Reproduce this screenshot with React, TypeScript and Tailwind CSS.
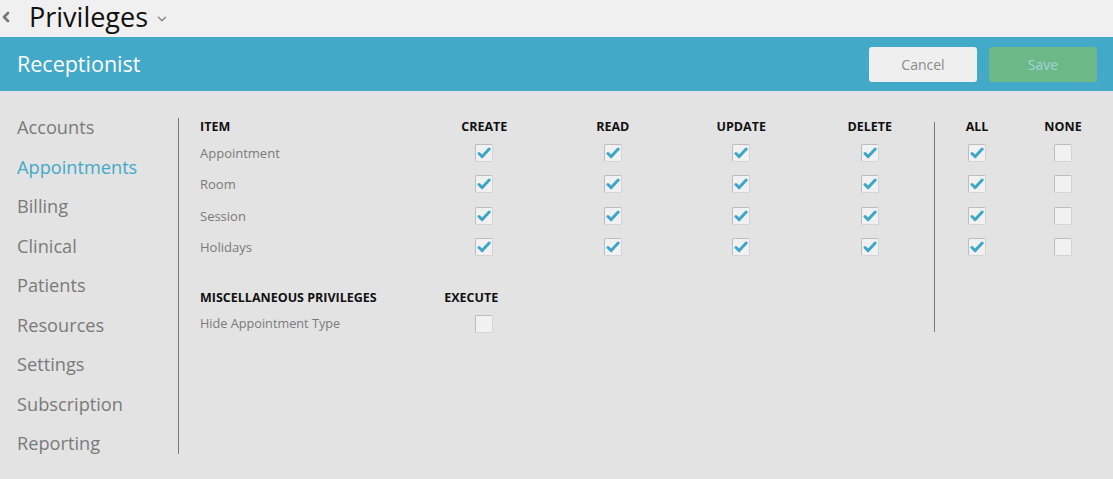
import { ChevronLeft, ChevronDown } from 'lucide-react';

const menu = ['Accounts', 'Appointments', 'Billing', 'Clinical', 'Patients', 'Resources', 'Settings', 'Subscription', 'Reporting'];
const items = ['Appointment', 'Room', 'Session', 'Holidays'];
const cols = ['CREATE', 'READ', 'UPDATE', 'DELETE'];

function Box({ checked }: { checked: boolean }) {
  return (
    <span className="inline-flex h-[18px] w-[18px] items-center justify-center rounded-[2px] border border-[#bdbdbd] border-b-[#d4d4d4] border-r-[#d4d4d4] bg-[#f1f1f1]">
      {checked && (
        <svg width="14" height="12" viewBox="0 0 14 12">
          <path d="M2 6.5 L5.2 9.6 L12.2 2" fill="none" stroke="#3ea7c7" strokeWidth="3" strokeLinecap="round" strokeLinejoin="round" />
        </svg>
      )}
    </span>
  );
}

export default function App() {
  return (
    <div className="h-[479px] w-[1113px] overflow-hidden bg-[#e3e3e3]" style={{ fontFamily: '"Open Sans", "Liberation Sans", sans-serif' }}>
      <div className="flex h-[37px] items-center bg-[#f0f0f0]">
        <ChevronLeft className="ml-[-2px] mt-[-4px] text-[#777]" size={16} strokeWidth={4} />
        <span className="ml-[15px] mt-[-4px] text-[27px] leading-none text-[#111]">Privileges</span>
        <ChevronDown className="ml-[7px] mt-[1px] text-[#888]" size={14} strokeWidth={2.5} />
      </div>

      <div className="flex h-[54px] items-center justify-between bg-[#42a9c8] pl-[17px] pr-[16px]">
        <span className="text-[21.5px] text-white">Receptionist</span>
        <div className="flex gap-[12px]">
          <button className="h-[35px] w-[108px] rounded-[3px] bg-[#efefef] text-[14px] text-[#8a8a8a]">Cancel</button>
          <button className="h-[35px] w-[108px] rounded-[3px] bg-[#6cb987] text-[14px] text-[#a2d3d9]">Save</button>
        </div>
      </div>

      <div className="flex">
        <div className="w-[178px] pl-[17px] pt-[17px]">
          {menu.map((m) => (
            <div key={m} className={`text-[18.2px] leading-[39.5px] ${m === 'Appointments' ? 'text-[#42a9c8]' : 'text-[#7a7a7a]'}`}>
              {m}
            </div>
          ))}
        </div>
        <div className="mt-[27px] h-[336px] w-px bg-[#7a7a7a]" />

        <div className="pl-[21px] pt-[23.5px]">
          <div className="grid w-[734px] grid-cols-[220px_128.5px_128.5px_128.5px_128.5px] items-center">
            <div className="h-[23px] text-[12.5px] font-bold leading-[23px] text-[#111]">ITEM</div>
            {cols.map((c) => (
              <div key={c} className="text-center text-[12.5px] font-bold leading-[23px] text-[#111]">{c}</div>
            ))}
            {items.map((it, i) => (
              <>
                <div key={it} className={`h-[31.3px] text-[13px] text-[#7a7a7a] ${i > 1 ? 'leading-[33px]' : 'leading-[31.3px]'}`}>{it}</div>
                {cols.map((c) => (
                  <div key={it + c} className="flex justify-center"><Box checked /></div>
                ))}
              </>
            ))}
          </div>

          <div className="mt-[23.8px] grid w-[734px] grid-cols-[220px_128.5px] items-center">
            <div className="h-[23px] text-[12.5px] font-bold leading-[23px] text-[#111]">MISCELLANEOUS PRIVILEGES</div>
            <div className="pr-[26px] text-center text-[12.5px] font-bold leading-[23px] text-[#111]">EXECUTE</div>
            <div className="h-[29px] text-[12.7px] leading-[29px] text-[#7a7a7a]">Hide Appointment Type</div>
            <div className="flex justify-center"><Box checked={false} /></div>
          </div>
        </div>

        <div className="mt-[31px] h-[210px] w-px bg-[#7a7a7a]" />

        <div className="pt-[23.5px]">
          <div className="grid grid-cols-[84px_88px] items-center">
            <div className="h-[23px] text-center text-[12.5px] font-bold leading-[23px] text-[#111]">ALL</div>
            <div className="text-center text-[12.5px] font-bold leading-[23px] text-[#111]">NONE</div>
            {items.map((it) => (
              <>
                <div key={it + 'a'} className="flex h-[31.3px] items-center justify-center"><Box checked /></div>
                <div key={it + 'n'} className="flex justify-center"><Box checked={false} /></div>
              </>
            ))}
          </div>
        </div>
      </div>
    </div>
  );
}
